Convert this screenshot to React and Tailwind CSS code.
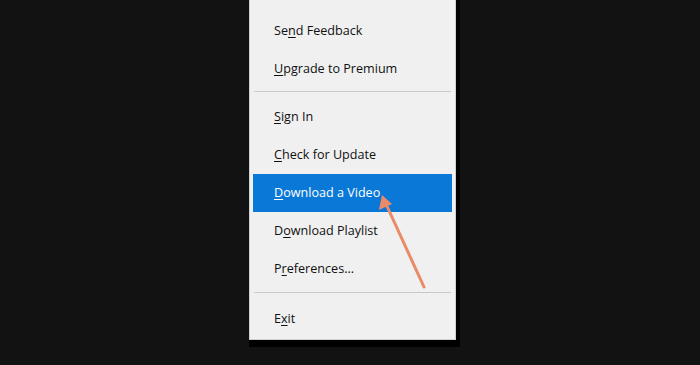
import React from 'react'

const items = [
  { pre: 'Help & Su', accel: 'p', post: 'port' },
  { pre: 'Se', accel: 'n', post: 'd Feedback' },
  { pre: '', accel: 'U', post: 'pgrade to Premium' },
  { sep: true },
  { pre: '', accel: 'S', post: 'ign In' },
  { pre: '', accel: 'C', post: 'heck for Update' },
  { pre: '', accel: 'D', post: 'ownload a Video', active: true },
  { pre: 'D', accel: 'o', post: 'wnload Playlist' },
  { pre: 'P', accel: 'r', post: 'eferences...' },
  { sep: true, last: true },
  { pre: 'E', accel: 'x', post: 'it' },
]

function MenuItem({ pre, accel, post, active }) {
  return (
    <div
      className={`h-[38px] mx-[3px] flex items-center pl-[21px] text-[12.6px] font-medium ${
        active ? 'bg-[#0a78d7] text-white' : 'text-[#111]'
      }`}
    >
      <span>
        {pre}
        <span className="underline underline-offset-2">{accel}</span>
        {post}
      </span>
    </div>
  )
}

export default function App() {
  return (
    <div
      className="relative w-[700px] h-[365px] bg-[#121212] overflow-hidden"
      style={{ fontFamily: '"Open Sans", "Noto Sans", sans-serif' }}
    >
      <div className="ml-[249px] mt-[-29px] w-[211px] pr-[4px] pb-[7px] bg-black">
        <div className="w-[207px] bg-[#f0f0f0] border border-[#cfcfcf] pt-[2px] pb-[1px]">
          {items.map((it, i) =>
            it.sep ? (
              <div key={i} className={`mx-[4px] ${it.last ? 'pt-[4px] h-[12px]' : 'pt-[3px] h-[10px]'}`}>
                <div className="h-px bg-[#c9c9c9]" />
              </div>
            ) : (
              <MenuItem key={i} {...it} />
            )
          )}
        </div>
      </div>

      <svg className="absolute left-0 top-0" width="700" height="365" viewBox="0 0 700 365">
        <line x1="424" y1="287" x2="386" y2="204" stroke="#ea8a66" strokeWidth="3" strokeLinecap="round" />
        <polygon points="382,195 379,210 392,204" fill="#ea8a66" />
      </svg>
    </div>
  )
}
